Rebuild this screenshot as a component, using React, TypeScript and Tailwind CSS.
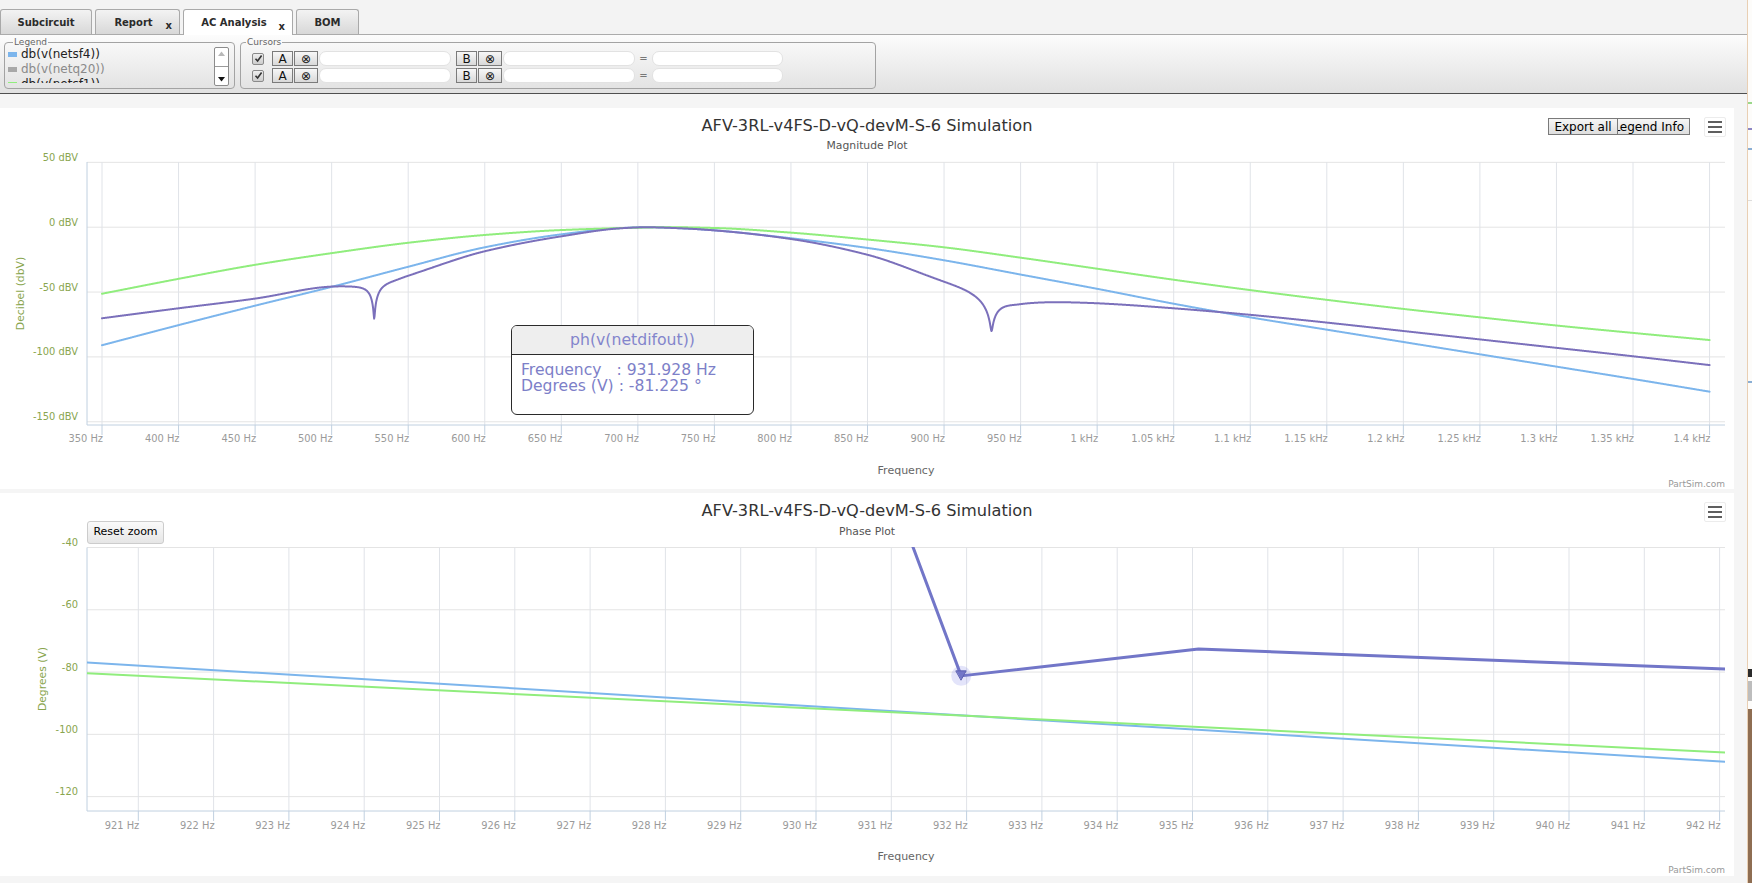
import React from "react";

type P = [number, number];

function pchip(pts: P[]) {
  const n = pts.length;
  const xs = pts.map((p) => p[0]);
  const ys = pts.map((p) => p[1]);
  const h: number[] = [];
  const d: number[] = [];
  for (let i = 0; i < n - 1; i++) {
    h.push(xs[i + 1] - xs[i]);
    d.push((ys[i + 1] - ys[i]) / h[i]);
  }
  const m: number[] = new Array(n).fill(0);
  m[0] = d[0];
  m[n - 1] = d[n - 2];
  for (let k = 1; k < n - 1; k++) {
    if (d[k - 1] * d[k] <= 0) m[k] = 0;
    else {
      const w1 = 2 * h[k] + h[k - 1];
      const w2 = h[k] + 2 * h[k - 1];
      m[k] = (w1 + w2) / (w1 / d[k - 1] + w2 / d[k]);
    }
  }
  return (x: number) => {
    let i = 0;
    if (x <= xs[0]) i = 0;
    else if (x >= xs[n - 1]) i = n - 2;
    else {
      while (x > xs[i + 1]) i++;
    }
    const t = (x - xs[i]) / h[i];
    const t2 = t * t;
    const t3 = t2 * t;
    return (
      (2 * t3 - 3 * t2 + 1) * ys[i] +
      (t3 - 2 * t2 + t) * h[i] * m[i] +
      (-2 * t3 + 3 * t2) * ys[i + 1] +
      (t3 - t2) * h[i] * m[i + 1]
    );
  };
}

const notch = (f: number, c: number, w: number, d: number) =>
  10 * Math.log10(((f - c) ** 2 + d * d) / ((f - c) ** 2 + w * w));

// Magnitude mapping (page coordinates)
const xm = (f: number) => 102 + ((f - 350) / 50) * 76.55;
const ym = (db: number) => 227.2 - db * 1.297;
// Phase mapping
const xp = (f: number) => 138.3 + (f - 921) * 75.3;
const yp = (deg: number) => 547.5 + (-40 - deg) * 3.114;

const greenPts: P[] = [
  [350, -51.3], [400, -39.8], [450, -29], [500, -20], [550, -12], [600, -6], [650, -2.2],
  [700, -0.4], [720, 0], [750, -0.6], [800, -4.2], [850, -9.5], [900, -15.5], [950, -23.5], [1000, -32],
  [1050, -40.5], [1100, -48.5], [1150, -56], [1200, -63], [1250, -69.5], [1300, -75.8], [1350, -81.5],
  [1400, -87],
];
const bluePts: P[] = [
  [350, -91], [400, -75.5], [450, -60.5], [500, -46], [550, -30.5], [600, -15.5], [650, -5.5],
  [690, -0.6], [705, 0], [730, -0.9], [750, -2.4], [800, -8.5], [850, -16], [900, -25.5], [950, -36.5],
  [1000, -47.5], [1050, -59], [1100, -69.5], [1150, -79], [1200, -88.5], [1250, -98],
  [1300, -107.5], [1350, -117], [1400, -126.8],
];
const purpleBasePts: P[] = [
  [350, -70.2], [400, -62.5], [450, -55], [500, -45.5], [520, -44.5], [528, -43.2], [540, -40.5],
  [550, -37], [600, -18.5], [650, -7], [690, -0.7], [705, 0], [730, -0.9], [750, -2.4], [800, -9],
  [850, -21], [900, -40.5], [931, -50], [950, -56.1], [975, -57], [1000, -58.3], [1050, -62.4],
  [1100, -67.5], [1150, -73.5], [1200, -80], [1250, -86.5], [1300, -93], [1350, -99.5],
  [1400, -106.3],
];

function magPath(fn: (f: number) => number) {
  let d = "";
  let first = true;
  for (let f = 350; f <= 1400.001; f += 0.25) {
    const x = xm(f);
    const y = ym(fn(f));
    d += (first ? "M" : "L") + x.toFixed(2) + "," + y.toFixed(2);
    first = false;
  }
  return d;
}

const greenFn = pchip(greenPts);
const blueFn = pchip(bluePts);
const purpleBase = pchip(purpleBasePts);
const purpleFn = (f: number) =>
  purpleBase(f) + notch(f, 527.8, 7, 0.3) + notch(f, 931, 20, 0.63);

const greenMag = magPath(greenFn);
const blueMag = magPath(blueFn);
const purpleMag = magPath(purpleFn);

function linePath(pts: P[], fx: (f: number) => number, fy: (v: number) => number) {
  return pts
    .map((p, i) => (i ? "L" : "M") + fx(p[0]).toFixed(2) + "," + fy(p[1]).toFixed(2))
    .join("");
}

const bluePhase = linePath(
  [[920.0, -76.9 + (0.32 * (108.8 - 76.9)) / 21.75], [942.4, -108.8 - (0.33 * (108.8 - 76.9)) / 21.75]],
  xp,
  yp
);
const greenPhase = linePath(
  [[920.0, -80.4 + (0.32 * (105.8 - 80.4)) / 21.75], [942.4, -105.8 - (0.33 * (105.8 - 80.4)) / 21.75]],
  xp,
  yp
);
const purplePhase = linePath(
  [[930.826, -10], [931.928, -81.225], [935.08, -72.6], [942.4, -79.35]],
  xp,
  yp
);

const magTicks = Array.from({ length: 22 }, (_, i) => 350 + i * 50);
const fmtMag = (f: number) => (f < 1000 ? `${f} Hz` : `${f / 1000} kHz`);
const phaseTicks = Array.from({ length: 22 }, (_, i) => 921 + i);

function MenuButton() {
  return (
    <div className="w-[22px] h-[20px] bg-white border border-[#ececec] rounded-[2px] flex flex-col items-center justify-center gap-[2.5px]">
      <div className="w-[14px] h-[2.5px] bg-[#5f5f5f]" />
      <div className="w-[14px] h-[2.5px] bg-[#5f5f5f]" />
      <div className="w-[14px] h-[2.5px] bg-[#5f5f5f]" />
    </div>
  );
}

function MagnitudeChart() {
  const yVals = [50, 0, -50, -100, -150];
  return (
    <div className="relative w-[1734px] h-[381px] bg-white shrink-0">
      <svg
        width={1734}
        height={381}
        viewBox="0 108 1734 381"
        className="block font-['DejaVu_Sans',sans-serif]"
      >
        <defs>
          <clipPath id="magclip">
            <rect x={87} y={150} width={1638} height={275} />
          </clipPath>
        </defs>
        <text x={867} y={125} textAnchor="middle" dominantBaseline="central" fontSize={16.2} fill="#333333">
          AFV-3RL-v4FS-D-vQ-devM-S-6 Simulation
        </text>
        <text x={867} y={145} textAnchor="middle" dominantBaseline="central" fontSize={10.8} fill="#555555">
          Magnitude Plot
        </text>
        {yVals.map((v) => (
          <line key={v} x1={87} x2={1725} y1={ym(v)} y2={ym(v)} stroke="#e4e4e4" strokeWidth={1} />
        ))}
        {magTicks.map((f) => (
          <g key={f}>
            <line x1={xm(f)} x2={xm(f)} y1={162} y2={425} stroke="#e0e3e8" strokeWidth={1} />
            <line x1={xm(f)} x2={xm(f)} y1={425} y2={435} stroke="#c0d0e0" strokeWidth={1} />
            <text x={xm(f) + 1} y={438} textAnchor="end" dominantBaseline="central" fontSize={9.9} fill="#9a9a9a">
              {fmtMag(f)}
            </text>
          </g>
        ))}
        <line x1={87} x2={87} y1={162} y2={425} stroke="#c0d0e0" strokeWidth={1} />
        <line x1={87} x2={1725} y1={425} y2={425} stroke="#c0d0e0" strokeWidth={1} />
        {yVals.map((v) => (
          <text key={v} x={78} y={ym(v) - 5} textAnchor="end" dominantBaseline="central" fontSize={9.9} fill="#89a54e">
            {`${v} dBV`}
          </text>
        ))}
        <text
          x={20}
          y={293.5}
          transform="rotate(-90 20 293.5)"
          textAnchor="middle"
          dominantBaseline="central"
          fontSize={10.8}
          fill="#89a54e"
        >
          Decibel (dbV)
        </text>
        <text x={906} y={470.7} textAnchor="middle" dominantBaseline="central" fontSize={11} fill="#666666">
          Frequency
        </text>
        <text x={1725} y={484} textAnchor="end" dominantBaseline="central" fontSize={9} fill="#999999">
          PartSim.com
        </text>
        <g clipPath="url(#magclip)" fill="none" strokeLinejoin="round" strokeLinecap="round">
          <path d={blueMag} stroke="#7cb5ec" strokeWidth={2} />
          <path d={greenMag} stroke="#90ed7d" strokeWidth={2} />
          <path d={purpleMag} stroke="#7b70bb" strokeWidth={2} />
        </g>
      </svg>

      <div className="absolute left-[1548px] top-[10px] flex">
        <button className="w-[70px] h-[17px] border border-[#7a7a7a] bg-linear-to-b from-[#f6f6f6] to-[#dedede] text-[12px] leading-none text-black font-['DejaVu_Sans',sans-serif]">
          Export all
        </button>
        <button className="w-[72px] h-[17px] border border-l-0 border-[#7a7a7a] bg-linear-to-b from-[#f6f6f6] to-[#dedede] text-[12px] leading-none text-black font-['DejaVu_Sans',sans-serif] overflow-hidden flex items-center justify-end pr-[5px]">
          <span className="whitespace-nowrap">Legend Info</span>
        </button>
      </div>
      <div className="absolute left-[1704px] top-[9px]">
        <MenuButton />
      </div>

      <div className="absolute left-[511px] top-[217px] w-[243px] h-[90px] border border-[#2a2a2a] rounded-[6px] bg-white overflow-hidden font-['DejaVu_Sans',sans-serif]">
        <div className="h-[29px] bg-[#eeeeee] border-b border-[#2a2a2a] flex items-center justify-center text-[15.7px] text-[#8385cc]">
          ph(v(netdifout))
        </div>
        <div className="pl-[9px] pt-[8px] text-[15.6px] leading-[15.6px] text-[#7d80c8] whitespace-pre">
          <div>{"Frequency   : 931.928 Hz"}</div>
          <div>{"Degrees (V) : -81.225 °"}</div>
        </div>
      </div>
    </div>
  );
}

function PhaseChart() {
  const yVals = [-40, -60, -80, -100, -120];
  const mx = xp(931.928);
  const my = yp(-81.225);
  return (
    <div className="relative w-[1734px] h-[383px] bg-white shrink-0">
      <svg
        width={1734}
        height={383}
        viewBox="0 493 1734 383"
        className="block font-['DejaVu_Sans',sans-serif]"
      >
        <defs>
          <clipPath id="phclip">
            <rect x={87} y={547} width={1638} height={265} />
          </clipPath>
        </defs>
        <text x={867} y={510} textAnchor="middle" dominantBaseline="central" fontSize={16.2} fill="#333333">
          AFV-3RL-v4FS-D-vQ-devM-S-6 Simulation
        </text>
        <text x={867} y={531.5} textAnchor="middle" dominantBaseline="central" fontSize={10.8} fill="#555555">
          Phase Plot
        </text>
        {yVals.map((v) => (
          <line key={v} x1={87} x2={1725} y1={yp(v)} y2={yp(v)} stroke="#e4e4e4" strokeWidth={1} />
        ))}
        {phaseTicks.map((f) => (
          <g key={f}>
            <line x1={xp(f)} x2={xp(f)} y1={547.5} y2={811} stroke="#e0e3e8" strokeWidth={1} />
            <line x1={xp(f)} x2={xp(f)} y1={811} y2={821} stroke="#c0d0e0" strokeWidth={1} />
            <text x={xp(f) + 1} y={825} textAnchor="end" dominantBaseline="central" fontSize={9.9} fill="#9a9a9a">
              {`${f} Hz`}
            </text>
          </g>
        ))}
        <line x1={87} x2={87} y1={547.5} y2={811} stroke="#c0d0e0" strokeWidth={1} />
        <line x1={87} x2={1725} y1={811} y2={811} stroke="#c0d0e0" strokeWidth={1} />
        {yVals.map((v) => (
          <text key={v} x={78} y={yp(v) - 5} textAnchor="end" dominantBaseline="central" fontSize={9.9} fill="#89a54e">
            {`${v}`}
          </text>
        ))}
        <text
          x={42}
          y={679}
          transform="rotate(-90 42 679)"
          textAnchor="middle"
          dominantBaseline="central"
          fontSize={10.8}
          fill="#89a54e"
        >
          Degrees (V)
        </text>
        <text x={906} y={856} textAnchor="middle" dominantBaseline="central" fontSize={11} fill="#666666">
          Frequency
        </text>
        <text x={1725} y={870} textAnchor="end" dominantBaseline="central" fontSize={9} fill="#999999">
          PartSim.com
        </text>
        <g clipPath="url(#phclip)" fill="none" strokeLinejoin="round" strokeLinecap="round">
          <path d={bluePhase} stroke="#7cb5ec" strokeWidth={2} />
          <path d={greenPhase} stroke="#90ed7d" strokeWidth={2} />
          <circle cx={mx} cy={my} r={10} fill="#8085e9" fillOpacity={0.22} stroke="none" />
          <path d={purplePhase} stroke="#7276c8" strokeWidth={3} />
          <path
            d={`M${mx - 5},${my - 5}L${mx + 5},${my - 5}L${mx},${my + 4}Z`}
            fill="#7276c8"
            stroke="#5c60b0"
            strokeWidth={1}
          />
        </g>
      </svg>

      <button className="absolute left-[87px] top-[28px] w-[77px] h-[23px] rounded-[3px] border border-[#cccccc] bg-linear-to-b from-[#fafafa] to-[#e6e6e6] text-[11px] text-black font-['DejaVu_Sans',sans-serif]">
        Reset zoom
      </button>
      <div className="absolute left-[1704px] top-[9px]">
        <MenuButton />
      </div>
    </div>
  );
}

function Tab({ label, width, active, close }: { label: string; width: string; active?: boolean; close?: boolean }) {
  return (
    <div
      className={
        "relative flex items-center justify-center rounded-t-[3px] border border-b-0 border-[#a9a9a9] text-[10px] font-bold text-[#2b2b2b] " +
        width +
        (active ? " h-[26px] -mb-px bg-white" : " h-[25px] bg-linear-to-b from-[#f3f3f3] to-[#d8d8d8]")
      }
    >
      <span className={close ? "-ml-[8px]" : ""}>{label}</span>
      {close && <span className="absolute right-[7px] bottom-[3px] text-[10px] font-bold leading-none">x</span>}
    </div>
  );
}

function Check() {
  return (
    <div className="w-[12px] h-[12px] border border-[#8a8a8a] rounded-[2px] bg-linear-to-b from-[#efefef] to-[#cdcdcd] flex items-center justify-center">
      <svg width="9" height="9" viewBox="0 0 9 9">
        <path d="M1.5 4.8 L3.6 7 L7.6 1.6" stroke="#333" strokeWidth="1.6" fill="none" />
      </svg>
    </div>
  );
}

function SmallBtn({ children, w }: { children: React.ReactNode; w: string }) {
  return (
    <div
      className={
        "h-[15px] border border-[#7b7b7b] bg-linear-to-b from-[#f7f7f7] to-[#d9d9d9] flex items-center justify-center text-[12px] leading-none text-[#111] " +
        w
      }
    >
      {children}
    </div>
  );
}

function Field({ w }: { w: string }) {
  return <div className={"h-[15px] bg-white border border-[#e2e2e2] rounded-[7px] " + w} />;
}

function CursorRow() {
  return (
    <div className="flex items-center h-[15px]">
      <div className="ml-[11px]">
        <Check />
      </div>
      <div className="ml-[8px]">
        <SmallBtn w="w-[21px]">A</SmallBtn>
      </div>
      <div className="ml-[1px]">
        <SmallBtn w="w-[24px]">⊗</SmallBtn>
      </div>
      <div className="ml-[1px]">
        <Field w="w-[132px]" />
      </div>
      <div className="ml-[5px]">
        <SmallBtn w="w-[21px]">B</SmallBtn>
      </div>
      <div className="ml-[1px]">
        <SmallBtn w="w-[24px]">⊗</SmallBtn>
      </div>
      <div className="ml-[1px]">
        <Field w="w-[132px]" />
      </div>
      <div className="w-[17px] text-center text-[10px] text-[#777]">=</div>
      <Field w="w-[131px]" />
    </div>
  );
}

function Toolbar() {
  return (
    <div className="h-[59px] shrink-0 bg-linear-to-b from-[#fcfcfc] to-[#e1e1e1] border-b border-[#4f4f4f] flex items-start gap-[5px] pl-[4px] pt-[2px]">
      <fieldset className="w-[231px] h-[52px] border border-[#a3a3a3] rounded-[4px] pl-[3px] pr-[5px] min-w-0">
        <legend className="ml-[5px] px-[1px] text-[9px] leading-[10px] text-[#666]">Legend</legend>
        <div className="flex h-[41px]">
          <div className="flex-1 h-[36px] overflow-hidden text-[12px] leading-[15px]">
            <div className="flex items-center gap-[4px] text-[#222]">
              <span className="w-[9px] h-[5px] bg-[#7cb5ec]" />
              db(v(netsf4))
            </div>
            <div className="flex items-center gap-[4px] text-[#8a8a8a]">
              <span className="w-[9px] h-[5px] bg-[#a8a8a8]" />
              db(v(netq20))
            </div>
            <div className="flex items-center gap-[4px] text-[#222]">
              <span className="w-[9px] h-[5px] bg-[#90ed7d]" />
              db(v(netsf1))
            </div>
          </div>
          <div className="w-[15px] h-[39px] border border-[#8c8c8c] rounded-[2px] bg-white flex flex-col items-center justify-between py-[2px]">
            <svg width="9" height="7" viewBox="0 0 9 7">
              <path d="M1 6 L4.5 1.5 L8 6 Z" fill="#b8b8b8" />
            </svg>
            <div className="w-[13px] h-px bg-[#9a9a9a]" />
            <svg width="9" height="7" viewBox="0 0 9 7">
              <path d="M1 1 L4.5 5.5 L8 1 Z" fill="#111" />
            </svg>
          </div>
        </div>
      </fieldset>
      <fieldset className="w-[636px] h-[52px] border border-[#a3a3a3] rounded-[4px] min-w-0">
        <legend className="ml-[5px] px-[1px] text-[9px] leading-[10px] text-[#666]">Cursors</legend>
        <div className="flex flex-col gap-[2px] pt-[4px]">
          <CursorRow />
          <CursorRow />
        </div>
      </fieldset>
    </div>
  );
}

function RightStrip() {
  return (
    <div className="w-[5px] shrink-0 border-l border-[#e9cfb3] bg-[#fdfcfa] flex flex-col">
      <div className="h-[102px]" />
      <div className="h-[2px] bg-[#9ad88a]" />
      <div className="h-[24px]" />
      <div className="h-[2px] bg-[#8c86c4]" />
      <div className="h-[18px]" />
      <div className="h-[2px] bg-[#8aaed4]" />
      <div className="h-[50px]" />
      <div className="h-px bg-[#dddddd]" />
      <div className="h-[180px]" />
      <div className="h-[2px] bg-[#8aaed4]" />
      <div className="h-[286px]" />
      <div className="h-[8px] bg-[#2b2b2b]" />
      <div className="h-[4px]" />
      <div className="h-[20px] bg-[#bdbdbd]" />
      <div className="h-[8px]" />
      <div className="flex-1 bg-[#8e6d52]" />
    </div>
  );
}

export default function App() {
  return (
    <div className="w-[1752px] h-[883px] overflow-hidden flex bg-[#f5f5f5] font-['DejaVu_Sans',sans-serif] text-[#222]">
      <div className="w-[1747px] shrink-0 flex flex-col">
        <div className="h-[35px] shrink-0 flex items-end gap-[3px] bg-[#f3f3f3] border-b border-[#ababab]">
          <Tab label="Subcircuit" width="w-[92px]" />
          <Tab label="Report" width="w-[85px]" close />
          <Tab label="AC Analysis" width="w-[110px]" close active />
          <Tab label="BOM" width="w-[63px]" />
        </div>
        <Toolbar />
        <div className="flex flex-col gap-[4px] pt-[14px]">
          <MagnitudeChart />
          <PhaseChart />
        </div>
      </div>
      <RightStrip />
    </div>
  );
}
